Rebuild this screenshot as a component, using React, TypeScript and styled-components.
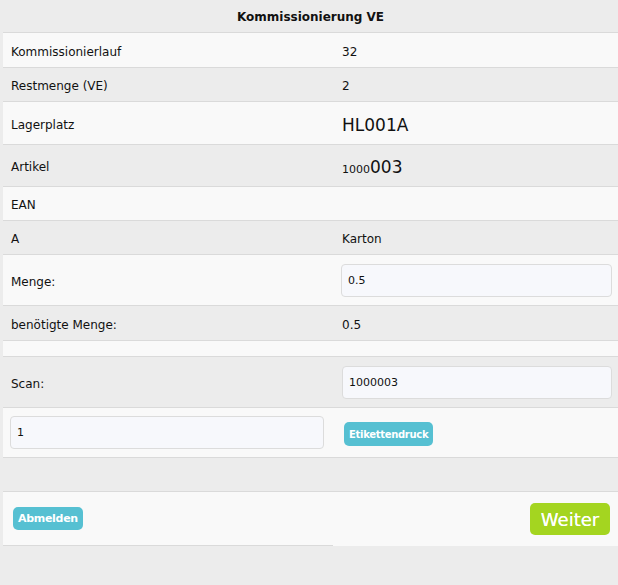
import React from "react";
import styled, { createGlobalStyle } from "styled-components";

const Global = createGlobalStyle`
  html, body { margin: 0; padding: 0; background: #ececec; }
  body { font-family: "DejaVu Sans", Verdana, sans-serif; color: #111; }
`;

const Page = styled.div`
  padding-left: 3px;
  width: 618px;
  box-sizing: border-box;
`;

const Header = styled.div`
  height: 33px;
  box-sizing: border-box;
  padding-top: 2px;
  border-bottom: 1px solid #dadada;
  display: flex;
  align-items: center;
  justify-content: center;
  font-weight: bold;
  font-size: 12px;
  background: #ececec;
`;

const Row = styled.div<{ $h: number; $dark?: boolean }>`
  display: grid;
  grid-template-columns: 330px 1fr;
  height: ${(p) => p.$h}px;
  background: ${(p) => (p.$dark ? "#ececec" : "#f9f9f9")};
  border-bottom: 1px solid #dadada;
  font-size: 12px;
`;

const Cell = styled.div<{ $pl?: number; $pr?: number }>`
  display: flex;
  align-items: center;
  box-sizing: border-box;
  padding-left: ${(p) => p.$pl ?? 8}px;
  padding-right: ${(p) => p.$pr ?? 6}px;
  padding-top: 3px;
  min-width: 0;
`;

const Big = styled.span`
  font-size: 17px;
`;

const Small = styled.span`
  font-size: 11px;
`;

const Input = styled.input`
  box-sizing: border-box;
  width: 100%;
  height: 33px;
  margin-top: -3px;
  border: 1px solid #dcdcdc;
  border-radius: 4px;
  background: #f7f8fc;
  font-family: "DejaVu Sans", Verdana, sans-serif;
  font-size: 11px;
  color: #111;
  padding: 0 6px;
  outline: none;
`;

const InfoBtn = styled.button<{ $fs: number; $h: number }>`
  border: none;
  border-radius: 5px;
  color: #fff;
  font-family: "DejaVu Sans", Verdana, sans-serif;
  cursor: pointer;
  padding: 0 5px;
  height: ${(p) => p.$h}px;
  background: #56c0d2;
  font-weight: bold;
  font-size: ${(p) => p.$fs}px;
  letter-spacing: -0.3px;
`;

const GoBtn = styled.button`
  border: none;
  border-radius: 5px;
  color: #fff;
  font-family: "DejaVu Sans", Verdana, sans-serif;
  cursor: pointer;
  padding: 0 10px;
  height: 32px;
  width: 80px;
  background: #a4d520;
  font-size: 18px;
  font-weight: 500;
  text-shadow: 0 0 0.4px #fff;
`;

const Footer = styled.div`
  display: grid;
  grid-template-columns: 330px 1fr;
  height: 54px;
  background: #f9f9f9;
`;

const FootLeft = styled.div`
  display: flex;
  align-items: center;
  padding-left: 10px;
  border-bottom: 1px solid #dadada;
`;

const FootRight = styled.div`
  display: flex;
  align-items: center;
  justify-content: flex-end;
  padding-right: 8px;
`;

export default function App() {
  return (
    <Page>
      <Global />
      <Header>Kommissionierung VE</Header>
      <Row $h={34}>
        <Cell>Kommissionierlauf</Cell>
        <Cell $pl={9}>32</Cell>
      </Row>
      <Row $h={33} $dark>
        <Cell>Restmenge (VE)</Cell>
        <Cell $pl={9}>2</Cell>
      </Row>
      <Row $h={42}>
        <Cell>Lagerplatz</Cell>
        <Cell $pl={9}>
          <Big>HL001A</Big>
        </Cell>
      </Row>
      <Row $h={41} $dark>
        <Cell>Artikel</Cell>
        <Cell $pl={9}>
          <span>
            <Small>1000</Small>
            <Big>003</Big>
          </span>
        </Cell>
      </Row>
      <Row $h={33}>
        <Cell>EAN</Cell>
        <Cell $pl={9}></Cell>
      </Row>
      <Row $h={33} $dark>
        <Cell>A</Cell>
        <Cell $pl={9}>Karton</Cell>
      </Row>
      <Row $h={50}>
        <Cell>Menge:</Cell>
        <Cell $pl={8}>
          <Input defaultValue="0.5" />
        </Cell>
      </Row>
      <Row $h={34} $dark>
        <Cell>benötigte Menge:</Cell>
        <Cell $pl={9}>0.5</Cell>
      </Row>
      <Row $h={15}>
        <Cell></Cell>
        <Cell></Cell>
      </Row>
      <Row $h={50} $dark>
        <Cell>Scan:</Cell>
        <Cell $pl={9}>
          <Input defaultValue="1000003" />
        </Cell>
      </Row>
      <Row $h={49}>
        <Cell $pl={7} $pr={9}>
          <Input defaultValue="1" />
        </Cell>
        <Cell $pl={11}>
          <InfoBtn $fs={10} $h={24}>Etikettendruck</InfoBtn>
        </Cell>
      </Row>
      <Row $h={33} $dark>
        <Cell></Cell>
        <Cell></Cell>
      </Row>
      <Footer>
        <FootLeft>
          <InfoBtn $fs={11} $h={23}>Abmelden</InfoBtn>
        </FootLeft>
        <FootRight>
          <GoBtn>Weiter</GoBtn>
        </FootRight>
      </Footer>
    </Page>
  );
}
